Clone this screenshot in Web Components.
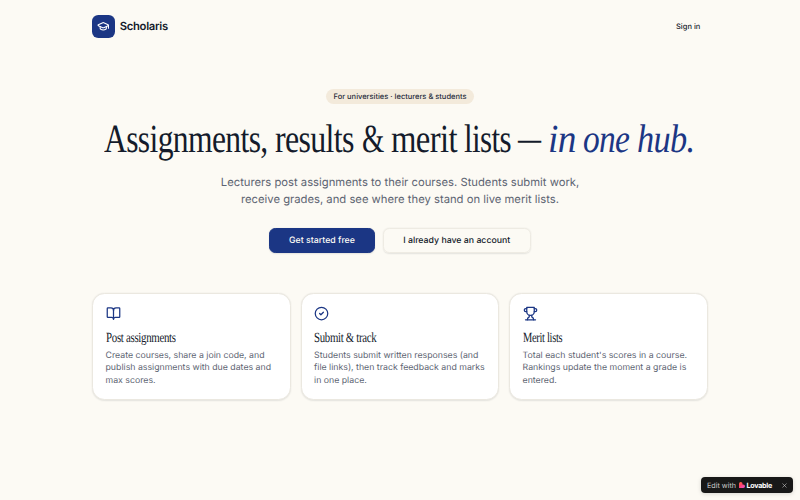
<!DOCTYPE html>
<html lang="en">
<head>
<meta charset="utf-8">
<title>Scholaris</title>
<style>
	body {
		margin: 0;
		height: 500px;
		overflow: hidden;
		background: #fcfaf4;
		color: #141b2b;
		font-family: Inter, 'Liberation Sans', sans-serif;
		text-rendering: geometricPrecision;
	}
</style>
</head>
<body>
<scholaris-page></scholaris-page>
<script>
const icons = {
	cap: '<path d="M21.42 10.922a1 1 0 0 0-.019-1.838L12.83 5.18a2 2 0 0 0-1.66 0L2.6 9.08a1 1 0 0 0 0 1.832l8.57 3.908a2 2 0 0 0 1.66 0z"/><path d="M22 10v6"/><path d="M6 12.5V16a6 3 0 0 0 12 0v-3.5"/>',
	book: '<path d="M12 7v14"/><path d="M3 18a1 1 0 0 1-1-1V4a1 1 0 0 1 1-1h5a4 4 0 0 1 4 4 4 4 0 0 1 4-4h5a1 1 0 0 1 1 1v13a1 1 0 0 1-1 1h-6a3 3 0 0 0-3 3 3 3 0 0 0-3-3z"/>',
	check: '<circle cx="12" cy="12" r="10"/><path d="m9 12 2 2 4-4"/>',
	trophy: '<path d="M6 9H4.5a2.5 2.5 0 0 1 0-5H6"/><path d="M18 9h1.5a2.5 2.5 0 0 0 0-5H18"/><path d="M4 22h16"/><path d="M10 14.66V17c0 .55-.47.98-.97 1.21C7.85 18.75 7 20.24 7 22"/><path d="M14 14.66V17c0 .55.47.98.97 1.21C16.15 18.75 17 20.24 17 22"/><path d="M18 2H6v7a6 6 0 0 0 12 0V2Z"/>',
	close: '<path d="M18 6 6 18"/><path d="m6 6 12 12"/>'
};

class LineIcon extends HTMLElement {
	connectedCallback() {
		this.attachShadow({ mode: 'open' }).innerHTML = `
			<style>
				:host { display: block; width: 15px; height: 15px; flex: none; }
				svg { display: block; width: 100%; height: 100%; }
			</style>
			<svg viewBox="0 0 24 24" fill="none" stroke="currentColor" stroke-width="2" stroke-linecap="round" stroke-linejoin="round">${icons[this.getAttribute('name')]}</svg>
		`;
	}
}

// squeezes its text to the given width, for a condensed serif look
class FitText extends HTMLElement {
	connectedCallback() {
		const width = Number(this.getAttribute('width'));
		this.attachShadow({ mode: 'open' }).innerHTML = `
			<style>
				:host { display: block; width: ${width}px; white-space: nowrap; }
				span { display: inline-block; transform-origin: 0 50%; }
			</style>
			<span><slot></slot></span>
		`;
		const span = this.shadowRoot.querySelector('span');
		span.style.transform = `scaleX(${width / span.offsetWidth})`;
	}
}

class SiteHeader extends HTMLElement {
	connectedCallback() {
		this.attachShadow({ mode: 'open' }).innerHTML = `
			<style>
				:host { display: flex; align-items: center; justify-content: space-between; height: 52.5px; }
				.brand { display: flex; align-items: center; gap: 5px; font-size: 11.25px; font-weight: 600; letter-spacing: -0.28px; }
				.logo {
					display: flex; align-items: center; justify-content: center;
					width: 22.5px; height: 22.5px; border-radius: 6.25px;
					background: #1b3684; color: #fff;
				}
				line-icon { width: 12.5px; height: 12.5px; }
				.signin { padding-right: 7.5px; font-size: 7.5px; font-weight: 500; }
			</style>
			<div class="brand"><div class="logo"><line-icon name="cap"></line-icon></div><span>Scholaris</span></div>
			<div class="signin">Sign in</div>
		`;
	}
}

class ActionButton extends HTMLElement {
	connectedCallback() {
		this.attachShadow({ mode: 'open' }).innerHTML = `
			<style>
				:host {
					display: flex; align-items: center; justify-content: center;
					box-sizing: border-box; height: 25px; width: 148.5px;
					border: 1px solid #eeebe3; border-radius: 6.25px;
					font-size: 8.75px; font-weight: 500; white-space: nowrap;
					box-shadow: 0 0.6px 1.5px rgba(20, 27, 43, 0.1);
				}
				:host([primary]) { width: 106px; background: #1b3684; border-color: #1b3684; color: #fcfaf4; }
			</style>
			<slot></slot>
		`;
	}
}

class HeroSection extends HTMLElement {
	connectedCallback() {
		this.attachShadow({ mode: 'open' }).innerHTML = `
			<style>
				:host { display: flex; flex-direction: column; align-items: center; padding-top: 36.5px; }
				.badge {
					height: 15px; line-height: 15px; padding: 0 7.5px; border-radius: 8px;
					background: #f3eadb; color: #262b3a; font-size: 7.5px; font-weight: 500;
				}
				h1 {
					display: flex; justify-content: center; gap: 7.5px; margin: 11px 0 0; padding-right: 1.5px;
					font: 400 40px/47px 'Liberation Serif', serif; letter-spacing: -0.8px;
				}
				h1 .accent { font-style: italic; color: #1b3684; }
				h1 .dash { margin-top: -1px; }
				p { margin: 11.5px 0 0; font-size: 11.25px; line-height: 17.5px; text-align: center; color: #5d6472; }
				.actions { display: flex; gap: 7.5px; margin-top: 19.5px; }
			</style>
			<div class="badge">For universities · lecturers &amp; students</div>
			<h1>
				<fit-text width="163.5">Assignments,</fit-text>
				<fit-text width="79">results</fit-text>
				<fit-text width="21.5">&amp;</fit-text>
				<fit-text width="65.5">merit</fit-text>
				<fit-text width="46.5">lists</fit-text>
				<fit-text class="dash" width="22.5">—</fit-text>
				<fit-text class="accent" width="28">in</fit-text>
				<fit-text class="accent" width="46">one</fit-text>
				<fit-text class="accent" width="57.5">hub.</fit-text>
			</h1>
			<p>Lecturers post assignments to their courses. Students submit work,<br>receive grades, and see where they stand on live merit lists.</p>
			<div class="actions">
				<action-button primary>Get started free</action-button>
				<action-button>I already have an account</action-button>
			</div>
		`;
	}
}

class FeatureCard extends HTMLElement {
	connectedCallback() {
		this.attachShadow({ mode: 'open' }).innerHTML = `
			<style>
				:host {
					display: block; box-sizing: border-box; height: 106.5px; padding: 12px 12.3px;
					border: 1px solid #ebe8e0; border-radius: 12.5px; background: #fff;
					box-shadow: 0 0.6px 1.5px rgba(20, 27, 43, 0.1);
				}
				line-icon { color: #1b3684; }
				h3 { margin: 8.5px 0 0; font: 400 14px/18px 'Liberation Serif', serif; letter-spacing: -0.4px; }
				p { margin: 2px 0 0; font-size: 8.75px; line-height: 12.5px; color: #5d6472; white-space: nowrap; }
			</style>
			<line-icon name="${this.getAttribute('icon')}"></line-icon>
			<h3><fit-text width="${this.getAttribute('title-width')}">${this.getAttribute('heading')}</fit-text></h3>
			<p><slot></slot></p>
		`;
	}
}

class EditBadge extends HTMLElement {
	connectedCallback() {
		this.attachShadow({ mode: 'open' }).innerHTML = `
			<style>
				:host {
					position: absolute; right: 7px; bottom: 7px; box-sizing: border-box;
					display: flex; align-items: center; width: 92px; height: 16px; padding: 0 5px 0 6px;
					border-radius: 4px; background: #181818; color: #fff;
					box-shadow: 0 1px 4px rgba(0, 0, 0, 0.15);
					font-size: 7.2px; white-space: nowrap;
				}
				.edit { color: #c9c9c9; }
				svg { width: 6px; height: 6px; margin: 0 1.5px 0 3px; }
				b { font-weight: 700; letter-spacing: -0.3px; }
				line-icon { width: 7px; height: 7px; margin-left: auto; color: #ccc; }
			</style>
			<span class="edit">Edit with</span>
			<svg viewBox="0 0 24 24">
				<defs><linearGradient id="heart" x1="0" y1="0" x2="0.8" y2="1"><stop offset="0" stop-color="#ff7a35"/><stop offset="0.45" stop-color="#ff3f68"/><stop offset="1" stop-color="#ed55c5"/></linearGradient></defs>
				<path fill="url(#heart)" d="M7 0a7 7 0 0 1 7 7v3h3a7 7 0 0 1 0 14H0V7a7 7 0 0 1 7-7z"/>
			</svg>
			<b>Lovable</b>
			<line-icon name="close"></line-icon>
		`;
	}
}

class ScholarisPage extends HTMLElement {
	connectedCallback() {
		this.attachShadow({ mode: 'open' }).innerHTML = `
			<style>
				:host { display: block; width: 615.6px; margin: 0 auto; }
				.features { display: grid; grid-template-columns: repeat(3, 1fr); gap: 10px; margin-top: 40px; }
			</style>
			<site-header></site-header>
			<hero-section></hero-section>
			<div class="features">
				<feature-card icon="book" heading="Post assignments" title-width="70">Create courses, share a join code, and<br>publish assignments with due dates and<br>max scores.</feature-card>
				<feature-card icon="check" heading="Submit &amp;amp; track" title-width="62.5">Students submit written responses (and<br>file links), then track feedback and marks<br>in one place.</feature-card>
				<feature-card icon="trophy" heading="Merit lists" title-width="39.5">Total each student's scores in a course.<br>Rankings update the moment a grade is<br>entered.</feature-card>
			</div>
			<edit-badge></edit-badge>
		`;
	}
}

customElements.define('line-icon', LineIcon);
customElements.define('fit-text', FitText);
customElements.define('site-header', SiteHeader);
customElements.define('action-button', ActionButton);
customElements.define('hero-section', HeroSection);
customElements.define('feature-card', FeatureCard);
customElements.define('edit-badge', EditBadge);
customElements.define('scholaris-page', ScholarisPage);
</script>
</body>
</html>
